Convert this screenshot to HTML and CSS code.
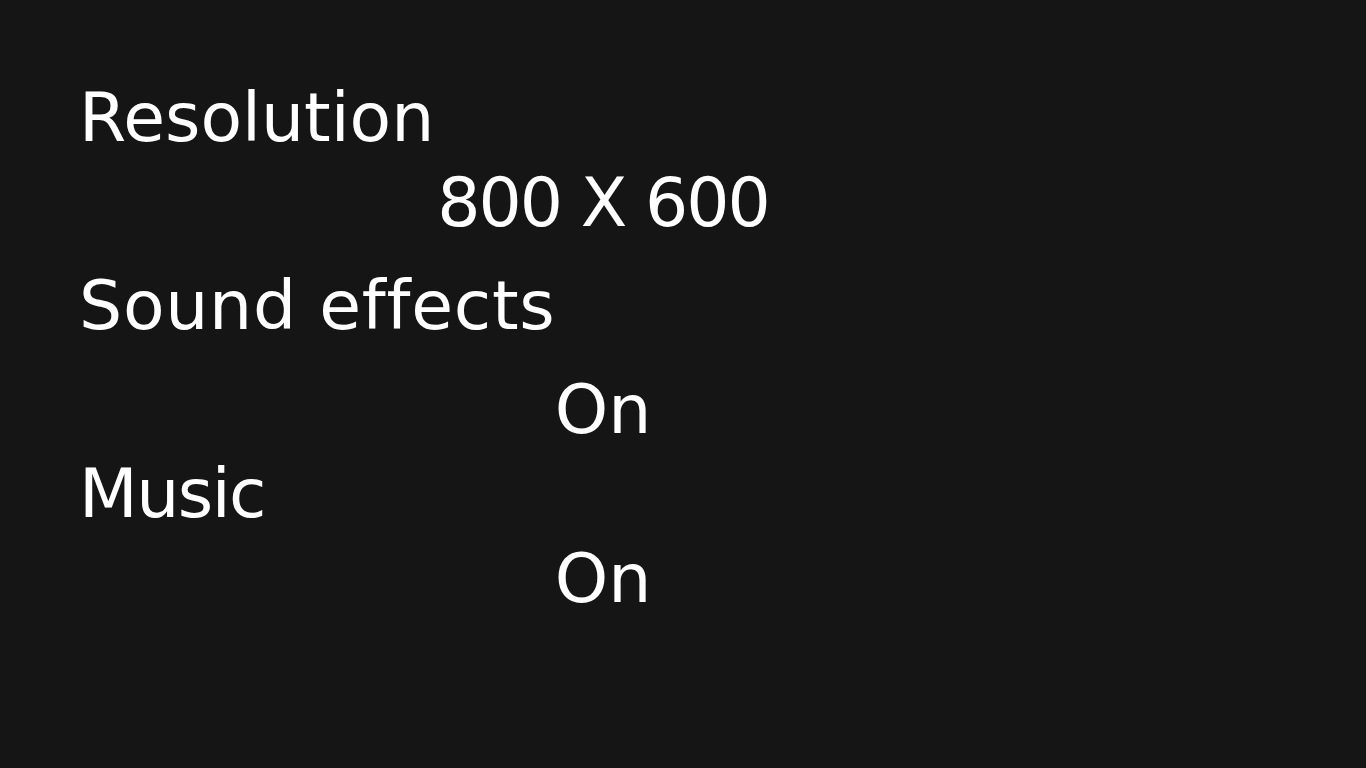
FILE: index.html
```html
<!DOCTYPE html>
<html lang="en">
<head>
<meta charset="utf-8">
<title>Settings</title>
<link rel="stylesheet" href="styles.css">
</head>
<body>
<main class="settings">
  <section class="setting">
    <div class="label">Resolution</div>
    <div class="value value-wide">800 X 600</div>
  </section>
  <section class="setting setting-loose">
    <div class="label label-sound">Sound effects</div>
    <div class="value">On</div>
  </section>
  <section class="setting setting-close">
    <div class="label label-music">Music</div>
    <div class="value">On</div>
  </section>
</main>
</body>
</html>
```
FILE: styles.css
```css
html, body {
  margin: 0;
  padding: 0;
  background: #151515;
}

body {
  width: 1366px;
  height: 768px;
  overflow: hidden;
  color: #ffffff;
  font-family: "DejaVu Sans", sans-serif;
}

.settings {
  display: flex;
  flex-direction: column;
  padding: 84px 0 0 79px;
  width: 1048px;
}

.setting {
  display: flex;
  flex-direction: column;
  gap: 17px;
}

.setting + .setting {
  margin-top: 35px;
}

.setting-loose {
  gap: 36px;
}

.setting + .setting-close {
  margin-top: 16px;
}

.label,
.value {
  font-size: 68px;
  line-height: 68px;
  white-space: nowrap;
}

.label-sound {
  letter-spacing: 0.75px;
}

.label-music {
  letter-spacing: -1.5px;
}

.value {
  text-align: center;
}

.value-wide {
  letter-spacing: -2px;
}
```
